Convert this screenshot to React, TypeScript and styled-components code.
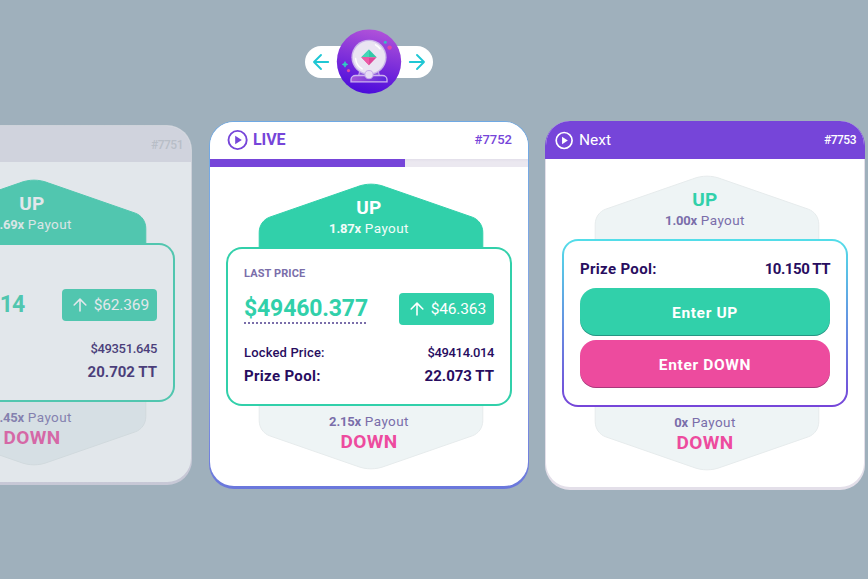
import React from 'react';
import styled, { createGlobalStyle, css } from 'styled-components';

const GlobalStyle = createGlobalStyle`
  * { box-sizing: border-box; }
  body {
    margin: 0;
    background: #9fb0bc;
    color: #280d5f;
    font-family: Roboto, "Noto Sans", sans-serif;
    overflow: hidden;
  }
`;

type Status = 'expired' | 'live' | 'next';

const Page = styled.main`
  height: 579px;
  width: 868px;
  overflow: hidden;
  display: flex;
  flex-direction: column;
`;

const Nav = styled.nav`
  display: flex;
  align-items: center;
  justify-content: space-between;
  width: 128px;
  height: 32px;
  margin: 46px 0 0 304.5px;
  border-radius: 16px;
  background: #fff;
  flex: none;
`;

const NavButton = styled.button`
  display: flex;
  align-items: center;
  justify-content: center;
  width: 32px;
  height: 32px;
  padding: 0;
  border: 0;
  background: none;
`;

const Logo = styled.svg`
  width: 66px;
  height: 66px;
  flex: none;
  margin: 0 -1px;
`;

const Rounds = styled.section`
  display: flex;
  align-items: flex-start;
  gap: 16px;
  margin: 43px 0 0 -128px;
`;

const frame = {
  expired: css`
    margin: 4px 1px 0 0;
    padding: 1px 1px 3px;
    opacity: 0.7;
    background: linear-gradient(#e2e2e8, #d9d3e2);
  `,
  live: css`
    padding: 1px 1px 3px;
    background: linear-gradient(#6fa9e4, #8aa6e4 60%, #6a77dc);
  `,
  next: css`
    padding: 0 1px 3px;
    background: linear-gradient(#7645d9 38px, #e3dfe9 38px);
  `,
};

const Card = styled.article<{ $status: Status }>`
  width: 320px;
  flex: none;
  border-radius: 25px;
  ${(p) => frame[p.$status]}
`;

const CardInner = styled.div`
  overflow: hidden;
  border-radius: 24px;
  background: #fff;
  padding-bottom: 16px;
`;

const headerLook = {
  expired: css`
    height: 36px;
    background: #e6e3eb;
    color: #c3c5cd;
    padding: 2px 8px 0;
  `,
  live: css`
    height: 37px;
    background: #fff;
    color: #7645d9;
    padding: 0 16px 1px;
  `,
  next: css`
    height: 38px;
    background: #7645d9;
    color: #fff;
    padding: 0 8px;
  `,
};

const Header = styled.header<{ $status: Status }>`
  display: flex;
  align-items: center;
  ${(p) => headerLook[p.$status]}
`;

const HeaderTitle = styled.h3<{ $live?: boolean }>`
  margin: 0 0 0 ${(p) => (p.$live ? 3 : 4)}px;
  font-size: ${(p) => (p.$live ? 16 : 15.5)}px;
  font-weight: ${(p) => (p.$live ? 700 : 400)};
  letter-spacing: ${(p) => (p.$live ? -0.1 : 0)}px;
  line-height: 20px;
`;

const RoundId = styled.span<{ $live?: boolean }>`
  margin-left: auto;
  font-size: ${(p) => (p.$live ? 13 : 12)}px;
  font-weight: 500;
  letter-spacing: ${(p) => (p.$live ? 0 : -0.5)}px;
  line-height: 18px;
`;

const Track = styled.div`
  height: 8px;
  background: linear-gradient(#e3dfea, #ebe8f0 3px);
`;

const Fill = styled.div`
  width: 61.4%;
  height: 8px;
  background: #7645d9;
`;

const Body = styled.div<{ $offset?: number }>`
  display: flex;
  flex-direction: column;
  padding: ${(p) => 16 + (p.$offset ?? 0)}px 16px 0;
`;

const Direction = styled.div<{ $down?: boolean }>`
  display: grid;
  width: 240px;
  height: 65px;
  margin: ${(p) => (p.$down ? '-1px auto 0' : '0 auto -1px')};
  > * { grid-area: 1 / 1; }
`;

const HexShape = styled.svg<{ $down?: boolean }>`
  width: 240px;
  height: 65px;
  transform: ${(p) => (p.$down ? 'scaleY(-1)' : 'none')};
`;

const DirectionText = styled.div<{ $down?: boolean }>`
  z-index: 1;
  display: flex;
  flex-direction: ${(p) => (p.$down ? 'column-reverse' : 'column')};
  justify-content: ${(p) => (p.$down ? 'flex-end' : 'flex-start')};
  align-items: center;
  padding-top: ${(p) => (p.$down ? 7 : 14)}px;
`;

const DirectionName = styled.h2<{ $color: string }>`
  margin: 0;
  color: ${(p) => p.$color};
  font-size: 19px;
  font-weight: 700;
  line-height: 21px;
  letter-spacing: 0.35px;
`;

const Payout = styled.div<{ $color: string; $down?: boolean }>`
  color: ${(p) => p.$color};
  font-size: 13.5px;
  line-height: ${(p) => (p.$down ? 18 : 21)}px;
  letter-spacing: 0.42px;
  white-space: pre;
  b { font-weight: 700; font-size: 13px; letter-spacing: -0.15px; }
`;

const Panel = styled.div<{ $next?: boolean }>`
  position: relative;
  z-index: 2;
  display: flex;
  flex-direction: column;
  height: ${(p) => (p.$next ? 168 : 159)}px;
  padding: 16px;
  border: 2px solid transparent;
  border-radius: 16px;
  background:
    linear-gradient(#fff, #fff) padding-box,
    ${(p) => (p.$next ? 'linear-gradient(#53dee9, #7645d9)' : 'linear-gradient(#31d0aa, #31d0aa)')} border-box;
`;

const PanelLabel = styled.div`
  height: 18px;
  color: #7a6eaa;
  font-size: 11px;
  font-weight: 700;
  letter-spacing: 0.1px;
  line-height: 18px;
  text-transform: uppercase;
`;

const PriceRow = styled.div`
  display: flex;
  align-items: center;
  justify-content: space-between;
  height: 32px;
  margin: 10px 0 17px;
`;

const Price = styled.div<{ $dotted?: boolean }>`
  height: 29px;
  color: #31d0aa;
  font-size: 23px;
  font-weight: 700;
  letter-spacing: ${(p) => (p.$dotted ? -0.15 : -0.8)}px;
  line-height: 28px;
  ${(p) => p.$dotted && css`
    background: radial-gradient(circle at 1px 1px, #7a6eaa 0.9px, transparent 1.2px) 0 100% / 4px 2px repeat-x;
  `}
`;

const Change = styled.div`
  display: flex;
  align-items: center;
  gap: 4px;
  height: 32px;
  padding: 0 8px;
  border-radius: 4px;
  background: #31d0aa;
  color: #fff;
  font-size: 15.5px;
  letter-spacing: -0.15px;
`;

const Line = styled.div<{ $strong?: boolean }>`
  display: flex;
  justify-content: space-between;
  font-size: ${(p) => (p.$strong ? 15 : 13)}px;
  font-weight: ${(p) => (p.$strong ? 700 : 500)};
  letter-spacing: ${(p) => (p.$strong ? 0.33 : 0.15)}px;
  line-height: ${(p) => (p.$strong ? 24 : 22)}px;
`;

const Amount = styled.span<{ $spacing: number }>`
  margin-left: auto;
  letter-spacing: ${(p) => p.$spacing}px;
`;

const EnterButton = styled.button<{ $down?: boolean }>`
  height: 48px;
  margin-top: ${(p) => (p.$down ? 4 : 7)}px;
  padding: 2px 0 0;
  border: 0;
  border-radius: 16px;
  background: ${(p) => (p.$down ? '#ed4b9e' : '#31d0aa')};
  box-shadow: inset 0 -1px 0 rgba(14, 14, 44, 0.3);
  color: #fff;
  font: 700 15.5px Roboto, sans-serif;
  letter-spacing: 0.65px;
`;

const ArrowIcon = ({ angle, size, color }: { angle: number; size: number; color: string }) => (
  <svg width={size} height={size} viewBox="0 0 24 24" fill="none" stroke={color} strokeWidth="1.9" strokeLinecap="round" strokeLinejoin="round">
    <path transform={`rotate(${angle} 12 12)`} d="M4.8 12H19M12 5l7 7-7 7" />
  </svg>
);

const PlayIcon = ({ size }: { size: number }) => (
  <svg width={size} height={size} viewBox="0 0 24 24">
    <circle cx="11.6" cy="12" r="9.1" fill="none" stroke="currentColor" strokeWidth="1.9" />
    <path d="M9.2 7.8v8.4l6.6-4.2z" fill="currentColor" />
  </svg>
);

const CrystalBall = () => (
  <Logo viewBox="0 0 66 66">
    <defs>
      <linearGradient id="disc" x1="0.6" y1="0" x2="0.4" y2="1">
        <stop offset="0" stopColor="#b052d9" />
        <stop offset="1" stopColor="#4a0bdb" />
      </linearGradient>
      <linearGradient id="base" x1="0" y1="0" x2="1" y2="0">
        <stop offset="0" stopColor="#a657d8" />
        <stop offset="1" stopColor="#5c25dc" />
      </linearGradient>
    </defs>
    <circle cx="33" cy="32.6" r="32.2" fill="url(#disc)" />
    <path d="M23.5 42.5h19l.8 4.2H22.7z" fill="#8a55dc" stroke="#cdb4f0" strokeWidth="1" />
    <path d="M15 52.8v-2.2c0-2.4 2-4.1 4.6-4.1h26.8c2.6 0 4.6 1.7 4.6 4.1v2.2z" fill="url(#base)" stroke="#cdb4f0" strokeWidth="1.3" />
    <circle cx="33" cy="28.3" r="17.6" fill="#c9b4ea" />
    <circle cx="33" cy="28.3" r="16.2" fill="#eae4f2" />
    <path d="M19.6 29.5a13.5 13.5 0 0 0 6.5 10.4" fill="none" stroke="#fff" strokeWidth="1.5" strokeLinecap="round" />
    <path d="M39.5 15.8a13.5 13.5 0 0 1 4.5 4" fill="none" stroke="#fff" strokeWidth="1.5" strokeLinecap="round" />
    <path d="M33 20.4l7.7 7.9H25.3z" fill="#31c8a8" />
    <path d="M33 20.4v7.9h-7.7z" fill="#43d7b8" />
    <path d="M25.3 28.3h15.4L33 36.2z" fill="#dc4798" />
    <path d="M25.3 28.3H33v7.9z" fill="#ed5aa6" />
    <circle cx="33" cy="45.6" r="4.1" fill="#e6dcf4" stroke="#c5a9ec" strokeWidth="1" />
    <path d="M9 32.6l.9 1.9 1.9.9-1.9.9-.9 1.9-.9-1.9-1.9-.9 1.9-.9z" fill="#2fd0c2" stroke="#2fd0c2" strokeWidth=".7" />
    <circle cx="12.5" cy="41.6" r="1.6" fill="#e046a8" />
    <circle cx="49.3" cy="13.2" r="1.5" fill="#36bfc4" />
    <circle cx="53.6" cy="18.6" r="2.2" fill="#e046a8" />
  </Logo>
);

interface DirectionProps {
  down?: boolean;
  active?: boolean;
  multiplier: string;
}

const DirectionBlock = ({ down, active, multiplier }: DirectionProps) => (
  <Direction $down={down}>
    <HexShape $down={down} viewBox="0 0 240 65">
      <path
        d="M10.2 65V49.3C10.2 42.5 14.3 36.5 20.6 34.2L107.5 4C117 0.2 127 0.2 136.5 4L223.4 34.2C229.7 36.5 233.8 42.5 233.8 49.3V65"
        fill={active ? '#31d0aa' : '#eef4f5'}
        stroke={active ? '#31d0aa' : '#e6ebec'}
        strokeWidth="1"
      />
    </HexShape>
    <DirectionText $down={down}>
      <DirectionName $color={active ? '#fff' : down ? '#ed4b9e' : '#31d0aa'}>{down ? 'DOWN' : 'UP'}</DirectionName>
      <Payout $down={down} $color={active ? '#f1fcf9' : '#7a6eaa'}>
        <b>{multiplier}</b> Payout
      </Payout>
    </DirectionText>
  </Direction>
);

interface PricePanelProps {
  label?: string;
  price: string;
  change: string;
  locked: string;
  pool: string;
}

const PricePanel = ({ label, price, change, locked, pool }: PricePanelProps) => (
  <Panel>
    <PanelLabel>{label}</PanelLabel>
    <PriceRow>
      <Price $dotted={Boolean(label)}>{price}</Price>
      <Change>
        <ArrowIcon angle={-90} size={20} color="#fff" />
        {change}
      </Change>
    </PriceRow>
    <Line>
      {label && <span>Locked Price:</span>}
      <Amount $spacing={-0.36}>{locked}</Amount>
    </Line>
    <Line $strong>
      {label && <span>Prize Pool:</span>}
      <Amount $spacing={0}>{pool}</Amount>
    </Line>
  </Panel>
);

export default function App() {
  return (
    <Page>
      <GlobalStyle />
      <Nav>
        <NavButton aria-label="Previous round">
          <ArrowIcon angle={180} size={24} color="#1fc7d4" />
        </NavButton>
        <CrystalBall />
        <NavButton aria-label="Next round">
          <ArrowIcon angle={0} size={24} color="#1fc7d4" />
        </NavButton>
      </Nav>
      <Rounds>
        <Card $status="expired">
          <CardInner>
            <Header $status="expired">
              <RoundId>#7751</RoundId>
            </Header>
            <Body $offset={1}>
              <DirectionBlock active multiplier="1.69x" />
              <PricePanel price="$49414.014" change="$62.369" locked="$49351.645" pool="20.702 TT" />
              <DirectionBlock down multiplier="2.45x" />
            </Body>
          </CardInner>
        </Card>
        <Card $status="live">
          <CardInner>
            <Header $status="live">
              <PlayIcon size={24} />
              <HeaderTitle $live>LIVE</HeaderTitle>
              <RoundId $live>#7752</RoundId>
            </Header>
            <Track>
              <Fill />
            </Track>
            <Body>
              <DirectionBlock active multiplier="1.87x" />
              <PricePanel label="Last price" price="$49460.377" change="$46.363" locked="$49414.014" pool="22.073 TT" />
              <DirectionBlock down multiplier="2.15x" />
            </Body>
          </CardInner>
        </Card>
        <Card $status="next">
          <CardInner>
            <Header $status="next">
              <PlayIcon size={21} />
              <HeaderTitle>Next</HeaderTitle>
              <RoundId>#7753</RoundId>
            </Header>
            <Body>
              <DirectionBlock multiplier="1.00x" />
              <Panel $next>
                <Line $strong>
                  <span>Prize Pool:</span>
                  <Amount $spacing={-0.45}>10.150 TT</Amount>
                </Line>
                <EnterButton>Enter UP</EnterButton>
                <EnterButton $down>Enter DOWN</EnterButton>
              </Panel>
              <DirectionBlock down multiplier="0x" />
            </Body>
          </CardInner>
        </Card>
      </Rounds>
    </Page>
  );
}
